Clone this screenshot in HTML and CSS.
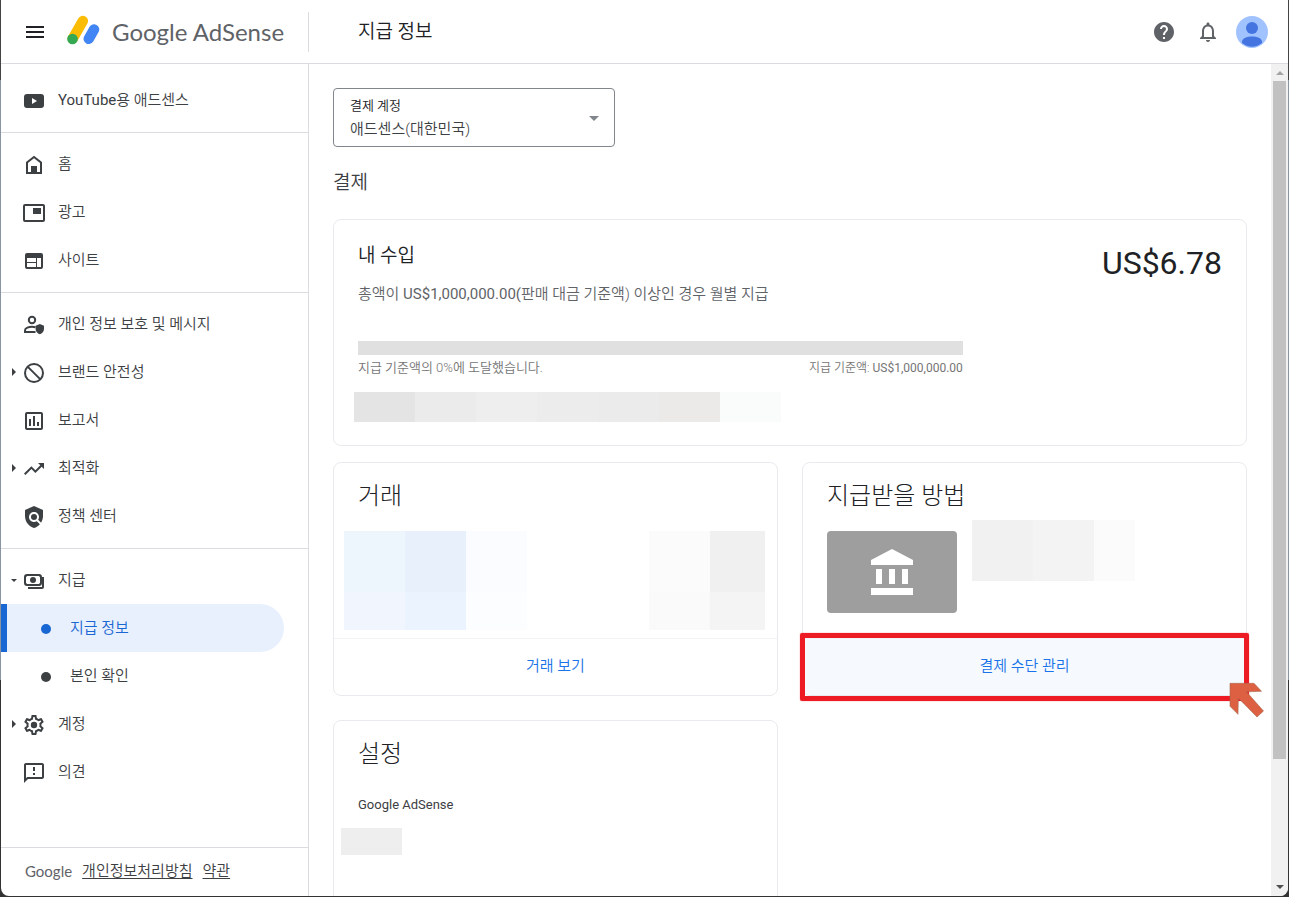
FILE: index.html
```html
<!DOCTYPE html>
<html lang="ko">
<head>
<meta charset="utf-8">
<title>지급 정보 - Google AdSense</title>
<meta name="viewport" content="width=device-width, initial-scale=1">
<link rel="stylesheet" href="styles.css">
</head>
<body>
<div class="window">
  <header class="topbar">
    <div class="brand">
      <button class="icon-button menu-button" type="button" aria-label="메뉴">
        <svg width="24" height="24" viewBox="0 0 24 24"><path fill="#202124" d="M3 6h18v2H3zM3 11h18v2H3zM3 16h18v2H3z"/></svg>
      </button>
      <a class="logo" href="#">
        <svg width="34" height="32" viewBox="0 0 34 32" fill="none" stroke-linecap="round" stroke-width="10.500">
          <path stroke="#fbbc04" d="M6.800 23.500L16.800 6"/>
          <path stroke="#4285f4" d="M22.800 23.800L28 14.500"/>
          <circle cx="6.500" cy="24" r="5.300" fill="#34a853"/>
        </svg>
        <span class="logo-text">Google AdSense</span>
      </a>
    </div>
    <h1 class="page-title">지급 정보</h1>
    <div class="actions">
      <button class="icon-button" type="button" aria-label="도움말">
        <svg width="24" height="24" viewBox="0 0 24 24"><path fill="#5f6368" d="M12 2C6.480 2 2 6.480 2 12s4.480 10 10 10 10-4.480 10-10S17.520 2 12 2zm1 17h-2v-2h2v2zm2.070-7.750l-.9.920C13.450 12.900 13 13.500 13 15h-2v-.5c0-1.100.450-2.100 1.170-2.830l1.240-1.260c.370-.360.590-.860.590-1.410 0-1.100-.9-2-2-2s-2 .9-2 2H8c0-2.210 1.790-4 4-4s4 1.790 4 4c0 .880-.360 1.680-.930 2.250z"/></svg>
      </button>
      <button class="icon-button" type="button" aria-label="알림">
        <svg width="24" height="24" viewBox="0 0 24 24"><path fill="#5f6368" d="M12 22c1.100 0 2-.9 2-2h-4c0 1.100.9 2 2 2zm6-6v-5c0-3.070-1.630-5.640-4.500-6.320V4c0-.830-.670-1.500-1.500-1.500s-1.500.670-1.500 1.500v.680C7.640 5.360 6 7.920 6 11v5l-2 2v1h16v-1l-2-2zm-2 1H8v-6c0-2.480 1.510-4.500 4-4.500s4 2.020 4 4.500v6z"/></svg>
      </button>
      <button class="avatar" type="button" aria-label="Google 계정">
        <svg width="32" height="32" viewBox="0 0 32 32"><circle cx="16" cy="16" r="16" fill="#a0c3ff"/><circle cx="16" cy="12" r="6" fill="#4374e0"/><path fill="#4374e0" d="M6 27v-1c0-4 5-5.500 10-5.500S26 22 26 26v1a15.500 15.500 0 0 1-20 0z"/></svg>
      </button>
    </div>
  </header>

  <div class="body">
    <aside class="sidebar">
      <nav class="nav">
        <div class="nav-group nav-group-first">
          <a class="nav-item" href="#">
            <span class="caret"></span>
            <svg class="nav-icon" viewBox="0 0 24 24"><rect x="2" y="5" width="20" height="14" rx="3"/><path fill="#fff" d="M10 9v6l5-3z"/></svg>
            <span><span class="nav-latin">YouTube</span>용 애드센스</span>
          </a>
        </div>
        <div class="nav-group">
          <a class="nav-item" href="#">
            <span class="caret"></span>
            <svg class="nav-icon" viewBox="0 0 24 24"><path fill="none" stroke="#3c4043" stroke-width="2" d="M5 20V9.500L12 4l7 5.500V20z"/><path d="M9 13h6v7H9z"/></svg>
            <span>홈</span>
          </a>
          <a class="nav-item" href="#">
            <span class="caret"></span>
            <svg class="nav-icon" viewBox="0 0 24 24"><rect x="2" y="4" width="20" height="16" rx="1" fill="none" stroke="#3c4043" stroke-width="2"/><path d="M11 7h8v6h-8z"/></svg>
            <span>광고</span>
          </a>
          <a class="nav-item" href="#">
            <span class="caret"></span>
            <svg class="nav-icon" viewBox="0 0 24 24"><rect x="4" y="5" width="16" height="14" rx="1" fill="none" stroke="#3c4043" stroke-width="2"/><path d="M4 5h16v4H4zM14 9h1v10h-1zM4 13h10v1H4z"/></svg>
            <span>사이트</span>
          </a>
        </div>
        <div class="nav-group">
          <a class="nav-item" href="#">
            <span class="caret"></span>
            <svg class="nav-icon" viewBox="0 0 24 24"><circle cx="10" cy="7" r="3.200" fill="none" stroke="#3c4043" stroke-width="2"/><path fill="none" stroke="#3c4043" stroke-width="2" d="M13.500 14.200C12.400 13.900 11.200 13.800 10 13.800c-3 0-7 1.200-7 3.600V19h10.500"/><path d="M17.800 11l4.200 1.800v3.200c0 2.500-1.800 4.700-4.200 5.300-2.400-.6-4.200-2.800-4.200-5.300v-3.200z"/></svg>
            <span>개인 정보 보호 및 메시지</span>
          </a>
          <a class="nav-item" href="#">
            <span class="caret"><svg width="4" height="8" viewBox="0 0 4 8"><path d="M0 0l4 4-4 4z"/></svg></span>
            <svg class="nav-icon" viewBox="0 0 24 24"><g fill="none" stroke="#3c4043" stroke-width="2"><circle cx="12" cy="12" r="9"/><path d="M5.600 5.600l12.800 12.800"/></g></svg>
            <span>브랜드 안전성</span>
          </a>
          <a class="nav-item" href="#">
            <span class="caret"></span>
            <svg class="nav-icon" viewBox="0 0 24 24"><rect x="4" y="4" width="16" height="16" rx="1" fill="none" stroke="#3c4043" stroke-width="2"/><path d="M7 10h2v7H7zM11 7h2v10h-2zM15 13h2v4h-2z"/></svg>
            <span>보고서</span>
          </a>
          <a class="nav-item" href="#">
            <span class="caret"><svg width="4" height="8" viewBox="0 0 4 8"><path d="M0 0l4 4-4 4z"/></svg></span>
            <svg class="nav-icon" viewBox="0 0 24 24"><path d="M16 6l2.290 2.290-4.880 4.880-4-4L2 16.590 3.410 18l6-6 4 4 6.300-6.290L22 12V6z"/></svg>
            <span>최적화</span>
          </a>
          <a class="nav-item" href="#">
            <span class="caret"></span>
            <svg class="nav-icon" viewBox="0 0 24 24"><path d="M21 5l-9-4-9 4v6c0 5.550 3.840 10.740 9 12 2.300-.560 4.330-1.900 5.880-3.710l-3.120-3.120c-1.940 1.290-4.580 1.070-6.290-.640-1.950-1.950-1.950-5.120 0-7.070 1.950-1.950 5.120-1.950 7.070 0 1.710 1.710 1.920 4.350.640 6.290l2.900 2.900C20.290 15.690 21 13.380 21 11V5z"/><circle cx="12" cy="12" r="3"/></svg>
            <span>정책 센터</span>
          </a>
        </div>
        <div class="nav-group">
          <a class="nav-item" href="#">
            <span class="caret"><svg width="6" height="3" viewBox="0 0 6 3"><path d="M0 0h6L3 3z"/></svg></span>
            <svg class="nav-icon" viewBox="0 0 24 24"><rect x="3" y="6" width="16" height="10" rx="2" fill="none" stroke="#3c4043" stroke-width="2"/><path d="M3 6h3L3 9zM19 6v3l-3-3zM3 16v-3l3 3zM19 16h-3l3-3z"/><circle cx="11" cy="11" r="3"/><path fill="none" stroke="#3c4043" stroke-width="2" d="M21 8v10c0 .6-.4 1-1 1H6"/></svg>
            <span>지급</span>
          </a>
          <a class="nav-item nav-sub nav-active" href="#" aria-current="page"><span class="dot"></span><span>지급 정보</span></a>
          <a class="nav-item nav-sub" href="#"><span class="dot"></span><span>본인 확인</span></a>
          <a class="nav-item" href="#">
            <span class="caret"><svg width="4" height="8" viewBox="0 0 4 8"><path d="M0 0l4 4-4 4z"/></svg></span>
            <svg class="nav-icon" viewBox="0 0 24 24"><path fill-rule="evenodd" d="M19.430 12.980c.040-.320.070-.640.070-.980 0-.340-.030-.660-.070-.980l2.110-1.650c.190-.150.240-.420.120-.640l-2-3.460c-.090-.160-.260-.250-.440-.250-.060 0-.120.010-.170.030l-2.490 1c-.520-.4-1.080-.730-1.690-.980l-.380-2.650C14.460 2.180 14.250 2 14 2h-4c-.250 0-.460.180-.490.420l-.380 2.650c-.610.250-1.170.590-1.690.980l-2.490-1c-.060-.020-.120-.030-.180-.030-.170 0-.340.090-.430.250l-2 3.460c-.130.220-.070.490.120.640l2.110 1.650c-.040.320-.070.650-.070.980 0 .330.030.660.070.980l-2.110 1.650c-.190.150-.240.420-.120.640l2 3.460c.090.160.260.250.440.250.060 0 .120-.010.170-.030l2.490-1c.520.4 1.080.730 1.690.980l.380 2.650c.030.240.240.420.490.420h4c.250 0 .460-.180.490-.420l.380-2.650c.610-.250 1.170-.590 1.690-.980l2.490 1c.060.020.120.030.180.030.170 0 .340-.090.430-.250l2-3.460c.120-.220.070-.490-.120-.640l-2.110-1.650zm-1.980-1.710c.040.310.050.520.050.730 0 .210-.020.430-.050.730l-.140 1.130.890.7 1.080.840-.7 1.210-1.270-.510-1.040-.420-.9.680c-.430.320-.840.560-1.250.730l-1.060.430-.160 1.130-.2 1.350h-1.400l-.190-1.350-.160-1.130-1.060-.430c-.430-.180-.830-.410-1.230-.710l-.910-.7-1.060.430-1.270.510-.7-1.210 1.080-.840.890-.7-.140-1.130c-.030-.310-.050-.540-.050-.740s.020-.430.050-.730l.140-1.130-.890-.7-1.080-.840.7-1.210 1.270.510 1.040.420.9-.680c.430-.320.840-.560 1.250-.730l1.060-.430.160-1.130.2-1.350h1.390l.190 1.350.160 1.130 1.060.430c.430.180.830.410 1.230.710l.910.7 1.060-.430 1.270-.510.7 1.210-1.070.850-.890.7.140 1.130z"/><circle cx="12" cy="12" r="3.200"/></svg>
            <span>계정</span>
          </a>
          <a class="nav-item" href="#">
            <span class="caret"></span>
            <svg class="nav-icon" viewBox="0 0 24 24"><path d="M20 2H4c-1.100 0-1.990.9-1.990 2L2 22l4-4h14c1.100 0 2-.9 2-2V4c0-1.100-.9-2-2-2zm0 14H5.170L4 17.170V4h16v12zM11 12h2v2h-2zM11 6h2v4h-2z"/></svg>
            <span>의견</span>
          </a>
        </div>
      </nav>
      <footer class="legal">
        <span class="legal-logo">Google</span>
        <a href="#">개인정보처리방침</a>
        <a href="#">약관</a>
      </footer>
    </aside>

    <main class="content">
      <div class="account">
        <label class="account-label" for="account">결제 계정</label>
        <select class="account-select" id="account"><option>애드센스(대한민국)</option></select>
        <svg class="account-arrow" width="10" height="5" viewBox="0 0 10 5"><path fill="#80868b" d="M0 0h10L5 5z"/></svg>
      </div>
      <h2 class="section-title">결제</h2>

      <section class="card earnings">
        <div class="earnings-head">
          <div>
            <h3 class="earnings-title">내 수입</h3>
            <p class="earnings-note">총액이 <span class="figure">US$1,000,000.00(</span>판매 대금 기준액) 이상인 경우 월별 지급</p>
          </div>
          <div class="amount">US$6.78</div>
        </div>
        <div class="threshold">
          <div class="threshold-bar"></div>
          <div class="threshold-labels">
            <span>지급 기준액의 0%에 도달했습니다.</span>
            <span class="threshold-goal">지급 기준액: <span class="figure">US$1,000,000.00</span></span>
          </div>
        </div>
        <div class="mosaic mosaic-earnings"><i class="g1"></i><i class="g2"></i><i class="g3"></i><i class="g4"></i><i class="g2"></i><i class="g5"></i><i class="g6"></i></div>
      </section>

      <div class="cards">
        <section class="card tile">
          <h3 class="tile-title">거래</h3>
          <div class="tile-body transactions">
            <div class="mosaic mosaic-blue"><i class="b1"></i><i class="b2"></i><i class="b3"></i><i class="b4"></i><i class="b5"></i><i class="b6"></i></div>
            <div class="mosaic mosaic-grey"><i class="n1"></i><i class="n2"></i><i class="n3"></i><i class="n4"></i></div>
          </div>
          <a class="tile-link" href="#">거래 보기</a>
        </section>

        <section class="card tile">
          <h3 class="tile-title">지급받을 방법</h3>
          <div class="tile-body method">
            <div class="bank">
              <svg width="42" height="46" viewBox="0 0 42 46"><path fill="#fff" d="M21 0l21 11v5H0v-5zM5 20h6v15H5zM18 20h6v15h-6zM31 20h6v15h-6zM0 39h42v7H0z"/></svg>
            </div>
            <div class="mosaic mosaic-method"><i class="n5"></i><i class="n6"></i><i class="n1"></i></div>
          </div>
          <a class="tile-link tile-link-hover" href="#">결제 수단 관리
            <span class="highlight"></span>
            <svg class="pointer" width="36" height="36" viewBox="0 0 36 36"><path fill="#dc6041" stroke="#a8684f" stroke-width=".6" d="M1 1.300h24l7.500 8-15 .5L34.500 29l-6.500 6L9.300 16l-.3 16.300-8-8z"/></svg>
          </a>
        </section>

        <section class="card tile">
          <h3 class="tile-title">설정</h3>
          <div class="settings">
            <p class="settings-name">Google AdSense</p>
            <div class="mosaic mosaic-settings"><i class="g3"></i></div>
          </div>
        </section>
      </div>
    </main>

    <div class="scrollbar" aria-hidden="true">
      <svg width="8" height="4" viewBox="0 0 8 4"><path fill="#a3a3a3" d="M4 0l4 4H0z"/></svg>
      <div class="scroll-track"><div class="scroll-thumb"></div></div>
      <svg width="8" height="4" viewBox="0 0 8 4"><path fill="#505050" d="M0 0h8L4 4z"/></svg>
    </div>
  </div>
</div>
</body>
</html>
```

FILE: styles.css
```css
* {
  box-sizing: border-box;
}

body {
  margin: 0;
  height: 100vh;
  padding: 0 1px 1px;
  overflow: hidden;
  background: linear-gradient(#444 0 80px, #8a95a3 80px 680px, #333 680px);
  color: #3c4043;
  font: 350 15px/24px Roboto, "Noto Sans CJK KR", sans-serif;
}

h1, h2, h3, p {
  margin: 0;
  font-weight: 350;
}

a {
  color: inherit;
  text-decoration: none;
}

svg {
  display: block;
  flex: none;
}

.window {
  display: flex;
  flex-direction: column;
  height: 100%;
  overflow: hidden;
  background: #fff;
  border-radius: 0 0 8px 8px;
}

/* Top bar */

.topbar {
  display: flex;
  flex: none;
  align-items: center;
  height: 64px;
  border-bottom: 1px solid #dadce0;
}

.brand {
  display: flex;
  align-items: center;
  gap: 8px;
  width: 308px;
  height: 40px;
  padding-left: 12px;
  border-right: 1px solid #dadce0;
}

.icon-button,
.avatar {
  display: flex;
  align-items: center;
  justify-content: center;
  padding: 0;
  border: 0;
  background: none;
}

.icon-button {
  width: 44px;
  height: 44px;
}

.logo {
  display: flex;
  align-items: center;
  gap: 12px;
  margin-left: 1px;
}

.logo svg {
  margin-bottom: 2px;
}

.logo-text {
  color: #5f6368;
  font: 24px/32px Lato, sans-serif;
  white-space: nowrap;
}

.page-title {
  flex: 1;
  padding-left: 49px;
  color: #202124;
  font-size: 19px;
  line-height: 28px;
}

.actions {
  display: flex;
  align-items: center;
  padding-right: 20px;
}

.avatar {
  width: 32px;
  height: 32px;
  margin-left: 6px;
}

/* Layout */

.body {
  display: flex;
  flex: 1;
  min-height: 0;
}

.sidebar {
  display: flex;
  flex: none;
  flex-direction: column;
  justify-content: space-between;
  width: 308px;
  border-right: 1px solid #dadce0;
}

.content {
  flex: 1;
  min-width: 0;
  overflow: hidden;
  padding: 24px;
}

/* Navigation */

.nav-group {
  padding: 7px 0 8px;
}

.nav-group + .nav-group {
  border-top: 1px solid #dadce0;
}

.nav-group.nav-group-first {
  padding: 12px 0 8px;
}

.nav-item {
  display: flex;
  align-items: center;
  height: 48px;
  padding-left: 9px;
}

.nav-latin,
.figure {
  font-weight: 400;
}

.nav-icon {
  width: 24px;
  height: 24px;
  margin: 2px 12px 0 4px;
  fill: #3c4043;
}

.caret {
  display: flex;
  justify-content: center;
  width: 8px;
  fill: #3c4043;
}

.nav-sub {
  gap: 19px;
  margin-right: 24px;
  padding-left: 40px;
}

.dot {
  width: 10px;
  height: 10px;
  margin-top: 2px;
  border-radius: 50%;
  background: currentColor;
}

.nav-active {
  padding-left: 34px;
  border-left: 6px solid #1967d2;
  border-radius: 0 24px 24px 0;
  background: #e8f0fe;
  color: #1967d2;
}

.legal {
  display: flex;
  align-items: center;
  gap: 10px;
  height: 49px;
  padding: 0 0 2px 24px;
  border-top: 1px solid #dadce0;
}

.legal a {
  text-decoration: underline;
  text-underline-offset: 2px;
}

.legal-logo {
  color: #5f6368;
  font: 15px/24px Lato, sans-serif;
}

/* Account selector */

.account {
  position: relative;
  width: 282px;
  height: 59px;
  padding: 7px 16px;
  border: 1px solid #80868b;
  border-radius: 4px;
}

.account-label {
  display: block;
  color: #202124;
  font-size: 13px;
  line-height: 20px;
}

.account-select {
  display: block;
  width: 100%;
  height: 26px;
  padding: 0;
  border: 0;
  appearance: none;
  background: none;
  color: #3c4043;
  font: inherit;
}

.account-arrow {
  position: absolute;
  top: 27px;
  right: 15px;
  pointer-events: none;
}

.section-title {
  margin: 22px 0 22px;
  font-size: 19px;
  line-height: 28px;
}

/* Cards */

.card {
  border: 1px solid #e8eaed;
  border-radius: 8px;
}

.earnings {
  height: 227px;
  padding: 22px 24px 22px;
}

.earnings-head {
  display: flex;
  justify-content: space-between;
}

.earnings-title {
  color: #202124;
  font-size: 19px;
  line-height: 28px;
}

.earnings-note {
  margin-top: 12px;
  color: #5f6368;
}

.amount {
  padding-top: 1px;
  color: #202124;
  font-size: 32px;
  font-weight: 400;
  line-height: 40px;
}

.threshold {
  width: 70%;
  margin-top: 35px;
}

.threshold-bar {
  height: 14px;
  background: #e0e0e0;
}

.threshold-labels {
  display: flex;
  justify-content: space-between;
  color: #757575;
  font-size: 13px;
  line-height: 26px;
}

.threshold-goal {
  font-size: 12px;
}

.cards {
  display: grid;
  grid-template-columns: repeat(2, minmax(0, 1fr));
  gap: 24px;
  margin-top: 16px;
}

.tile {
  display: flex;
  flex-direction: column;
  height: 234px;
}

.tile-title {
  padding: 17px 24px 0;
  color: #202124;
  font-size: 24px;
  font-weight: 300;
  line-height: 32px;
}

.tile-body {
  display: flex;
  flex: 1;
}

.transactions {
  justify-content: space-between;
  padding: 19px 12px 0 10px;
}

.method {
  gap: 15px;
  padding: 8px 24px 0;
}

.bank {
  display: flex;
  align-items: center;
  justify-content: center;
  width: 130px;
  height: 82px;
  margin-top: 11px;
  border-radius: 4px;
  background: #9e9e9e;
}

.tile-link {
  position: relative;
  height: 57px;
  padding: 15px 0;
  border-top: 1px solid #f1f3f4;
  color: #1a73e8;
  text-align: center;
}

.tile-link-hover {
  border-radius: 0 0 8px 8px;
  background: #f6fafe;
}

.highlight {
  position: absolute;
  inset: -6px -3px;
  border: 5px solid #ed1c24;
  border-radius: 2px;
  box-shadow: 0 0 1px #ed1c24;
}

.pointer {
  position: absolute;
  right: -19px;
  bottom: -23px;
}

.settings {
  padding: 23px 24px 0;
}

.settings-name {
  font-size: 13px;
  font-weight: 400;
}

/* Pixelated blocks over private data */

.mosaic {
  display: grid;
  grid-template-columns: repeat(7, 61px);
  align-content: start;
}

.mosaic-earnings {
  grid-auto-rows: 30px;
  margin: 11px 0 0 -4px;
}

.mosaic-blue {
  grid-template: 61px 38px / repeat(3, 61px);
}

.mosaic-grey {
  grid-template: 61px 38px / 61px 55px;
}

.mosaic-method {
  grid-template: 61px / 61px 61px 41px;
}

.mosaic-settings {
  grid-auto-rows: 27px;
  margin: 11px 0 0 -17px;
}

.g1 { background: #e4e4e4; }
.g2 { background: #ebebeb; }
.g3 { background: #eeeeee; }
.g4 { background: #ececec; }
.g5 { background: #ebeae8; }
.g6 { background: #fafcfb; }
.b1 { background: #edf5fd; }
.b2 { background: #e8f0fc; }
.b3 { background: #fafcff; }
.b4 { background: #f1f6fe; }
.b5 { background: #ebf3fe; }
.b6 { background: #fbfdff; }
.n1 { background: #fbfbfb; }
.n2 { background: #f0f0f0; }
.n3 { background: #fafafa; }
.n4 { background: #f4f4f4; }
.n5 { background: #f1f1f1; }
.n6 { background: #f3f3f3; }

/* Scrollbar */

.scrollbar {
  display: flex;
  flex: none;
  flex-direction: column;
  align-items: center;
  gap: 6px;
  width: 17px;
  padding: 7px 0;
  background: #f1f1f1;
}

.scroll-track {
  flex: 1;
  width: 13px;
}

.scroll-thumb {
  height: 85%;
  background: #c1c1c1;
}
```
